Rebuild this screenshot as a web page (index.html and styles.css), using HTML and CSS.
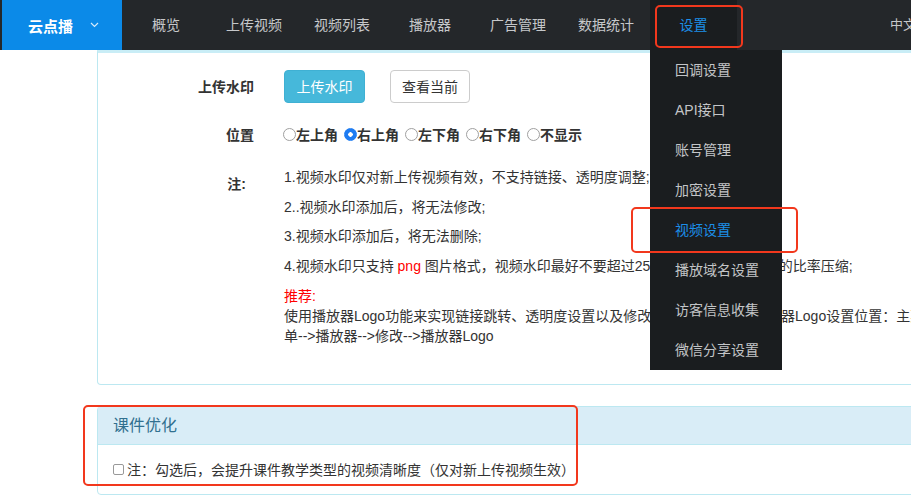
FILE: index.html
```html
<!DOCTYPE html>
<html lang="zh-CN">
<head>
    <meta charset="UTF-8">
    <meta name="viewport" content="width=device-width, initial-scale=1.0">
    <title>云点播 - 视频设置</title>
    <link rel="stylesheet" href="styles.css">
</head>
<body>

    <!-- Barra de navegación superior -->
    <div class="navbar">
        <div class="brand">
            <span>云点播</span>
            <svg class="chevron" width="9" height="6" viewBox="0 0 9 6"><polyline points="1,1 4.5,4.5 8,1" fill="none" stroke="#d6ebfb" stroke-width="1.2"/></svg>
        </div>
        <ul class="nav">
            <li>概览</li>
            <li>上传视频</li>
            <li>视频列表</li>
            <li>播放器</li>
            <li>广告管理</li>
            <li>数据统计</li>
            <li class="active">
                设置
                <ul class="dropdown">
                    <li>回调设置</li>
                    <li>API接口</li>
                    <li>账号管理</li>
                    <li>加密设置</li>
                    <li class="current">视频设置</li>
                    <li>播放域名设置</li>
                    <li>访客信息收集</li>
                    <li>微信分享设置</li>
                </ul>
            </li>
        </ul>
        <div class="lang">中文</div>
    </div>

    <div class="main">
        <!-- Panel de marca de agua -->
        <div class="panel panel-top">
            <div class="panel-body">
                <div class="form-row">
                    <label class="form-label">上传水印</label>
                    <div class="form-control">
                        <button class="btn btn-info">上传水印</button>
                        <button class="btn btn-default">查看当前</button>
                    </div>
                </div>
                <div class="form-row">
                    <label class="form-label">位置</label>
                    <div class="form-control radios">
                        <label><input type="radio" name="pos">左上角</label>
                        <label><input type="radio" name="pos" checked>右上角</label>
                        <label><input type="radio" name="pos">左下角</label>
                        <label><input type="radio" name="pos">右下角</label>
                        <label><input type="radio" name="pos">不显示</label>
                    </div>
                </div>
                <div class="form-row notes-row">
                    <label class="form-label note-label">注:</label>
                    <div class="notes">
                        <p>1.视频水印仅对新上传视频有效，不支持链接、透明度调整;</p>
                        <p>2..视频水印添加后，将无法修改;</p>
                        <p>3.视频水印添加后，将无法删除;</p>
                        <p>4.视频水印只支持 <span class="red">png</span> 图片格式，视频水印最好不要超过250KB,建议按原图宽高的比率压缩;</p>
                        <p class="last"><span class="red">推荐:</span><br>使用播放器Logo功能来实现链接跳转、透明度设置以及修改水印位置等功能,播放器Logo设置位置：主菜单-->播放器-->修改-->播放器Logo</p>
                    </div>
                </div>
            </div>
        </div>

        <!-- Panel de optimización de cursos -->
        <div class="panel panel-info">
            <div class="panel-heading">课件优化</div>
            <div class="panel-body small">
                <label class="check"><input type="checkbox">注：勾选后，会提升课件教学类型的视频清晰度（仅对新上传视频生效）</label>
            </div>
        </div>
    </div>

    <!-- Marcas rojas de anotación -->
    <div class="mark mark-nav"></div>
    <div class="mark mark-menu"></div>
    <div class="mark mark-panel"></div>

</body>
</html>
```

FILE: styles.css
```css
/* Estilos generales */
body {
    font-family: 'Liberation Sans', 'Noto Sans CJK SC', sans-serif;
    font-size: 14px;
    color: #333;
    background: #fff;
    margin: 0;
    overflow: hidden;
    position: relative;
    height: 499px;
}

ul {
    list-style: none;
    margin: 0;
    padding: 0;
}

/* Barra superior */
.navbar {
    display: flex;
    height: 50px;
    background: #24272a;
    padding-left: 2px;
    width: 1000px;
}

.brand {
    display: flex;
    align-items: center;
    width: 120px;
    background: #0b8ae8;
    color: #fff;
    font-size: 15px;
    font-weight: bold;
}

.brand span {
    margin-left: 26px;
}

.chevron {
    margin-left: 17px;
}

.nav {
    display: flex;
}

.nav > li {
    position: relative;
    width: 88px;
    line-height: 50px;
    text-align: center;
    color: #c6c8ca;
}

.nav > li.active {
    background: #1a1d1f;
    color: #1c8fe8;
    width: 87px;
}

/* Menú desplegable */
.dropdown {
    position: absolute;
    top: 50px;
    left: 0;
    width: 132px;
    background: #1a1d1f;
    text-align: left;
    z-index: 5;
}

.dropdown li {
    line-height: 40px;
    padding-left: 25px;
    color: #c3c5c7;
}

.dropdown li.current {
    color: #1c8fe8;
}

.lang {
    margin-left: 153px;
    line-height: 50px;
    color: #c6c8ca;
    font-size: 13px;
}

/* Contenido */
.main {
    padding-left: 97px;
    width: 900px;
}

.panel {
    border: 1px solid #bce8f1;
    border-radius: 4px;
    background: #fff;
}

.panel-top {
    border-top: 3px solid #c9edf6;
    border-radius: 0 0 4px 4px;
}

.panel-top .panel-body {
    padding: 16px 0 38px;
}

.form-row {
    display: flex;
    align-items: center;
    min-height: 34px;
    margin-bottom: 14px;
}

.form-label {
    width: 156px;
    text-align: right;
    font-weight: bold;
    flex-shrink: 0;
}

.form-control {
    margin-left: 30px;
    display: flex;
    align-items: center;
}

.btn {
    font-family: inherit;
    font-size: 14px;
    height: 33px;
    padding: 0;
    border-radius: 4px;
    margin-right: 25px;
    white-space: nowrap;
    cursor: pointer;
}

.btn-info {
    background: #46b8da;
    border: 1px solid #3fb0d3;
    color: #fff;
    width: 81px;
}

.btn-default {
    background: #fff;
    border: 1px solid #ccc;
    color: #333;
    width: 80px;
}

/* Radios */
.radios {
    margin-left: 29px;
}

.radios label {
    display: flex;
    align-items: center;
    font-weight: bold;
    margin-right: 6px;
}

input[type="radio"] {
    appearance: none;
    width: 13px;
    height: 13px;
    margin: 0;
    border: 1px solid #a0a0a0;
    border-radius: 50%;
    background: #fff;
}

input[type="radio"]:checked {
    border-color: #1e7cf2;
    background: radial-gradient(circle, #fff 0 2px, #1e7cf2 2.5px);
}

/* Notas */
.notes-row {
    align-items: flex-start;
    margin-bottom: 0;
}

.note-label {
    padding-top: 8px;
    padding-right: 8px;
    width: 148px;
}

.notes {
    margin-left: 30px;
    width: 652px;
    padding-top: 2px;
}

.notes p {
    margin: 0 0 9.7px;
    line-height: 20px;
}

.notes p.last {
    margin-bottom: 0;
}

.red {
    color: #f00;
}

/* Panel informativo */
.panel-info {
    margin-top: 21px;
    height: 87px;
}

.panel-heading {
    background: #d9edf7;
    color: #31708f;
    font-size: 16px;
    padding: 1px 15px 0;
    line-height: 36px;
    border-bottom: 1px solid #bce8f1;
}

.panel-body.small {
    padding: 15px;
}

.check {
    display: flex;
    align-items: center;
    line-height: 20px;
}

input[type="checkbox"] {
    appearance: none;
    width: 11px;
    height: 11px;
    margin: 0 3px 0 0;
    border: 1px solid #999;
    border-radius: 2px;
    background: #fff;
}

/* Anotaciones rojas sobre la captura */
.mark {
    position: absolute;
    border: 2.5px solid #f2381d;
    border-radius: 5px;
    z-index: 10;
}

.mark-nav {
    left: 655px;
    top: 5px;
    width: 84px;
    height: 39px;
}

.mark-menu {
    left: 631px;
    top: 207px;
    width: 163px;
    height: 42px;
}

.mark-panel {
    left: 83px;
    top: 405px;
    width: 491px;
    height: 77px;
}
```
